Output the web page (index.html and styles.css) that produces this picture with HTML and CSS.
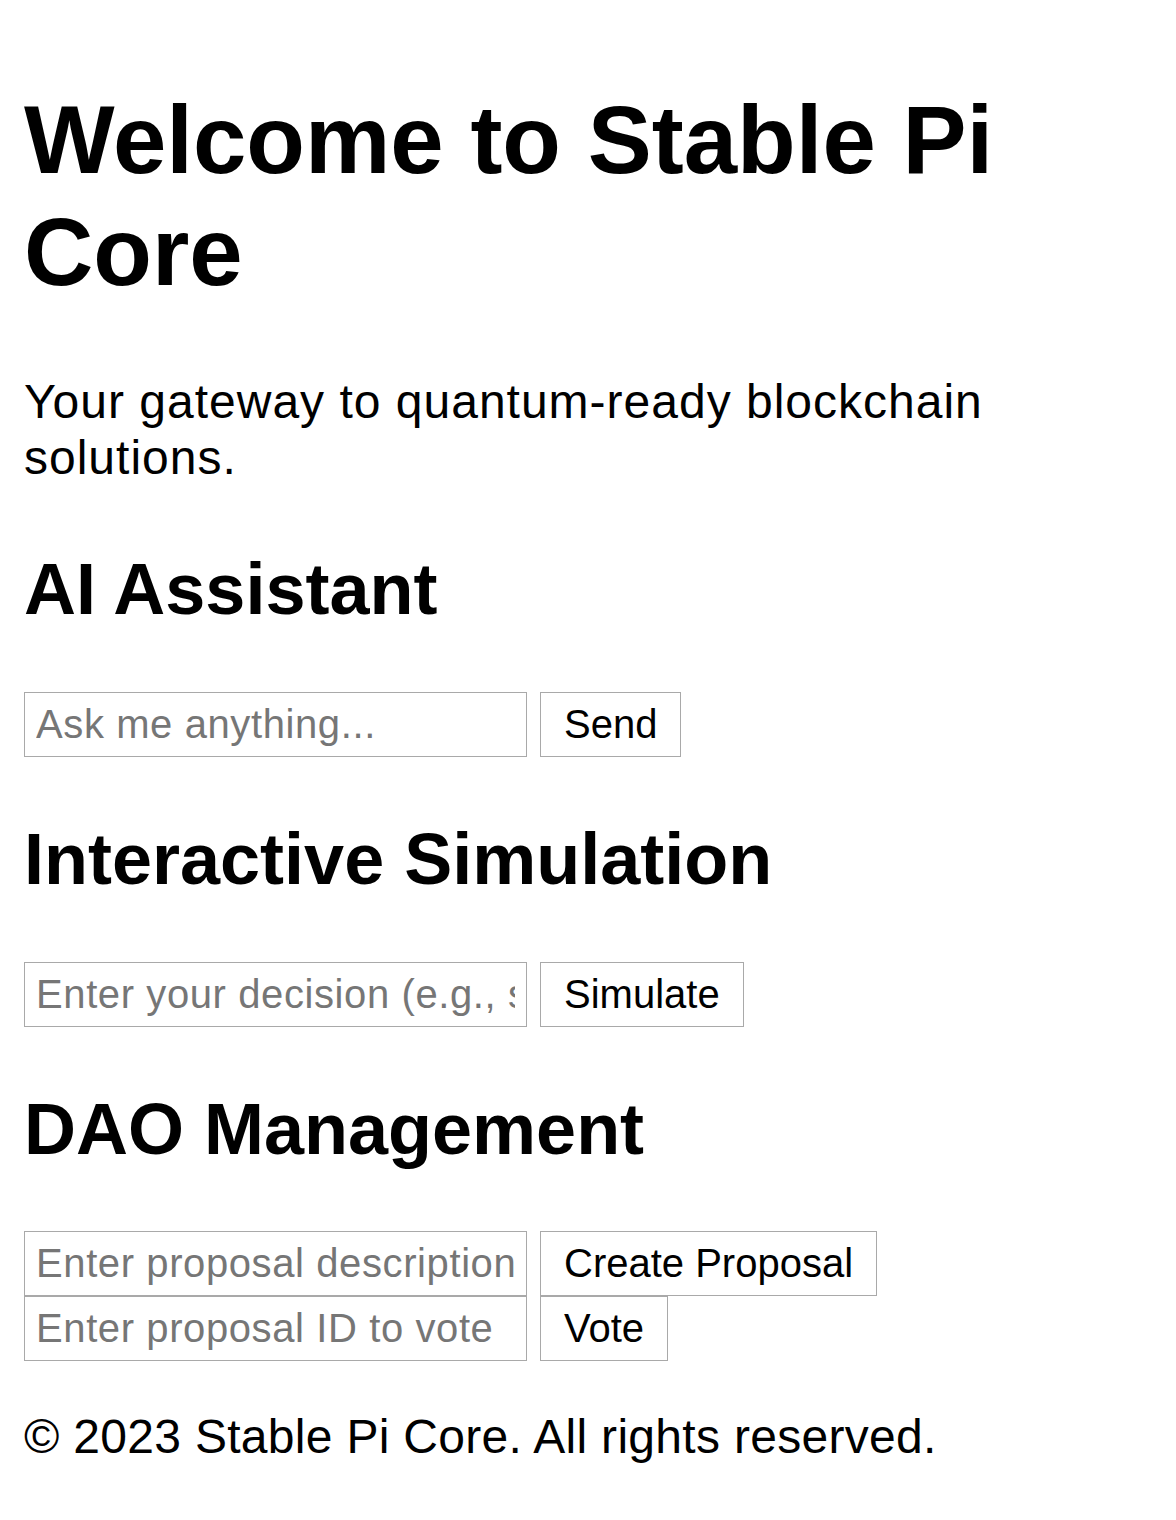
FILE: index.html
```html
<!DOCTYPE html>
<html lang="en">
<head>
<meta charset="utf-8">
<title>Stable Pi Core</title>
<link rel="stylesheet" href="styles.css">
</head>
<body>
<header class="intro">
  <h1 class="title">Welcome to Stable Pi Core</h1>
  <p class="tagline">Your gateway to quantum-ready blockchain solutions.</p>
</header>
<main>
  <section class="panel">
    <h2 class="panel-title">AI Assistant</h2>
    <div class="row">
      <input class="field" type="text" placeholder="Ask me anything...">
      <button class="btn" type="button">Send</button>
    </div>
  </section>
  <section class="panel">
    <h2 class="panel-title">Interactive Simulation</h2>
    <div class="row">
      <input class="field" type="text" placeholder="Enter your decision (e.g., stake, unstake)">
      <button class="btn" type="button">Simulate</button>
    </div>
  </section>
  <section class="panel">
    <h2 class="panel-title panel-title-last">DAO Management</h2>
    <div class="row">
      <input class="field" type="text" placeholder="Enter proposal description">
      <button class="btn" type="button">Create Proposal</button>
    </div>
    <div class="row">
      <input class="field" type="text" placeholder="Enter proposal ID to vote">
      <button class="btn" type="button">Vote</button>
    </div>
  </section>
</main>
<footer class="footer">
  <p class="copy">© 2023 Stable Pi Core. All rights reserved.</p>
</footer>
</body>
</html>
```
FILE: styles.css
```css
html {
  background: #ffffff;
}
body {
  margin: 0 24px 24px;
  font-family: "Liberation Sans", Arial, sans-serif;
  font-size: 48px;
  line-height: 56px;
  color: #000000;
  background: #ffffff;
}
.title {
  font-size: 96px;
  line-height: 112px;
  font-weight: 700;
  margin: 84px 0 66px;
}
.tagline {
  margin: 0 0 61px;
  letter-spacing: 1px;
}
.panel-title {
  font-size: 72px;
  line-height: 84px;
  font-weight: 700;
  margin: 60px 0 61px;
}
.panel-title-last {
  margin-bottom: 60px;
}
.row {
  display: flex;
  align-items: stretch;
  gap: 13px;
}
.field {
  box-sizing: border-box;
  width: 503px;
  height: 65px;
  margin: 0;
  padding: 0 11px;
  border: 1px solid #a9a9a9;
  border-radius: 0;
  background: #ffffff;
  font-family: "Liberation Sans", Arial, sans-serif;
  font-size: 40px;
  letter-spacing: 0.6px;
  color: #000000;
  outline: none;
}
.field::placeholder {
  color: #767676;
  opacity: 1;
}
.btn {
  box-sizing: border-box;
  height: 65px;
  margin: 0;
  padding: 0 23px;
  border: 1px solid #a9a9a9;
  border-radius: 0;
  background: #ffffff;
  font-family: "Liberation Sans", Arial, sans-serif;
  font-size: 40px;
  color: #000000;
}
.footer {
  margin-top: 48px;
}
.copy {
  margin: 0;
  letter-spacing: 0.3px;
}
```
